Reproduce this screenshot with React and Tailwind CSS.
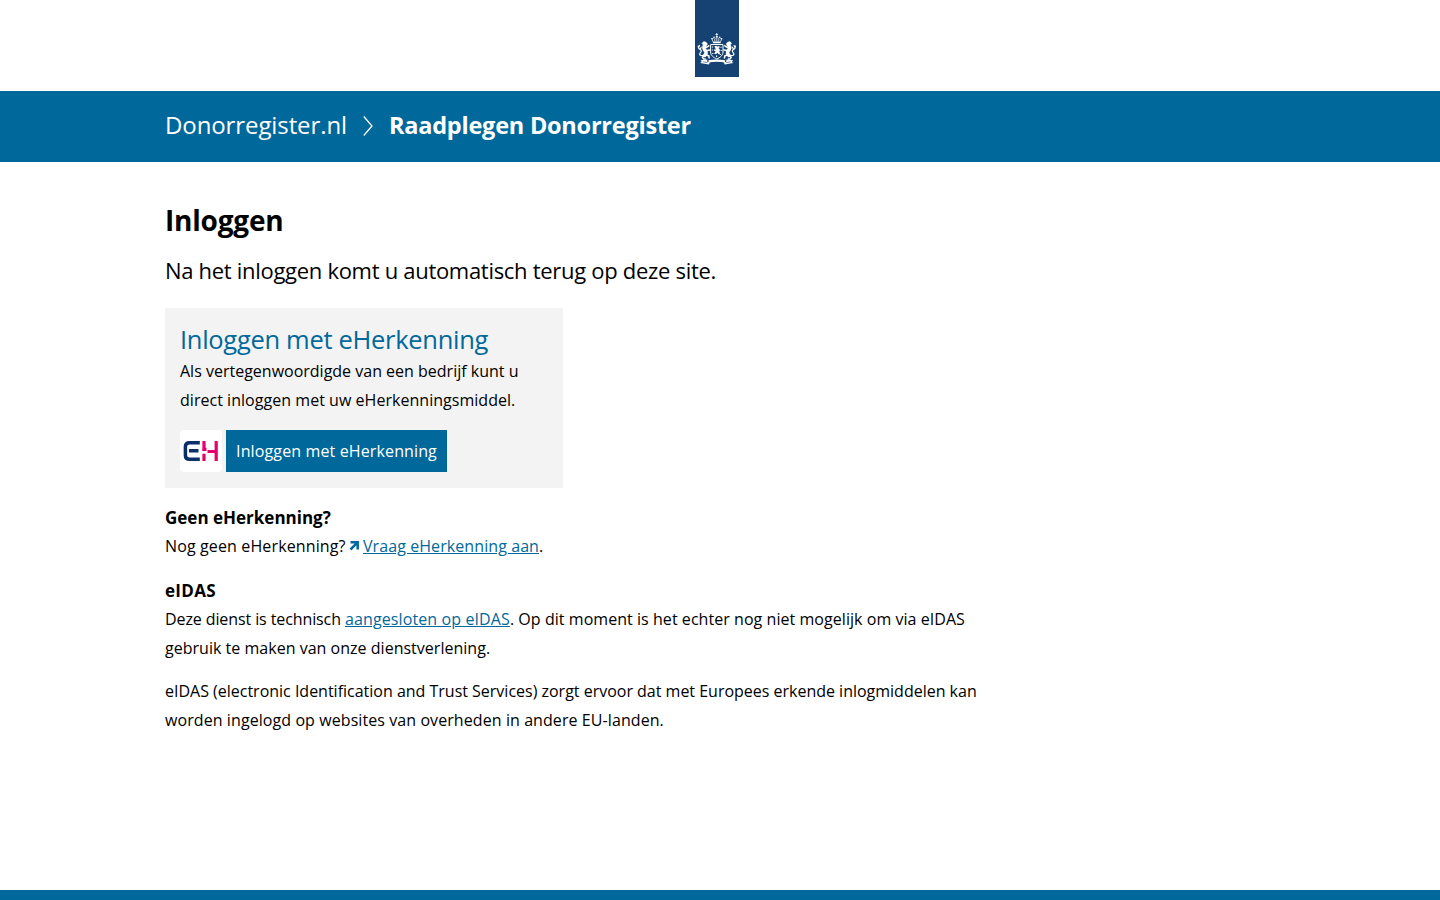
import React from 'react';

function Lion() {
  return (
    <>
      <path d="M7 43.300l1.700-1.700 2 .5 1.600 1.500-.4 1.600-1.900.7z" fill="#fff" strokeWidth=".5" />
      <path d="M9.600 45.500c-1.500 2.400-.6 3.900.7 5.300s1 3.200-.6 4.600" strokeWidth="3.500" />
      <path d="M11 47.500l2.800-1.700M11.500 50.400l3.300-.5M9.500 55l-2 2.300M10.500 54.500l3.400 1.500.2 2M7.500 57.500l1.200 1.600h1.500" strokeWidth="1.500" />
      <path d="M8.500 55.500c-2.800.6-4.400-.5-3.700-2s2-1.700 1.300-3.200-2.300-1-2.500-2.500M3.500 47.500l1-2M3.500 47.600l-.3-1.500M5.500 48.500l.7-1.300" strokeWidth="1.200" />
    </>
  );
}

function CoatOfArms() {
  return (
    <svg className="block h-[77px] w-[44px]" viewBox="0 0 44 77" role="img" aria-label="Rijksoverheid">
      <rect width="44" height="77" fill="#154273" />
      {/* crown */}
      <g fill="#fff">
        <path d="M21.400 33h.8v1.100h.9v.7h-.9v1h-.8v-1h-.9v-.7h.9z" />
        <circle cx="21.800" cy="36.800" r="1" />
        <circle cx="19" cy="37.300" r=".75" />
        <circle cx="24.600" cy="37.300" r=".75" />
        <circle cx="16.900" cy="38.700" r=".75" />
        <circle cx="26.700" cy="38.700" r=".75" />
        <path d="M17.600 41.600h8.400l-.5 1.700h-7.400z" />
      </g>
      <path d="M18 41.500c-1.600-2.400-.4-3.500.8-3.700M25.600 41.500c1.600-2.400.4-3.500-.8-3.700M20.100 41.300c-.8-1.800-.2-3 .5-3.500M23.500 41.300c.8-1.800.2-3-.5-3.500M21.800 37.500v4" fill="none" stroke="#fff" strokeWidth=".75" />
      {/* shield */}
      <path d="M15.600 44.500h12.400v7.500c0 3.500-3 5.500-6.200 7-3.200-1.500-6.200-3.500-6.200-7z" fill="#154273" stroke="#fff" strokeWidth="1" />
      <path d="M19.300 46.300l1.800-.6 1.500.9 1.800-.5.300 1.400-1.300.6 1.700 1.600-.8 1.900.9 2-1.600.7-1.100-1.600-1.600 1.500-1.700-.6 1.500-2.300-1.800-.7.200-1.200 1.700.1-.4-1.300z" fill="#fff" />
      <path d="M17.500 46.500v1M17.500 49.500v1M17.800 53v1M26 46.800v1M26.200 50v1M25.300 54v1M21.600 55.500v1.500" stroke="#fff" strokeWidth="1.200" />
      {/* supporting lions */}
      <g fill="none" stroke="#fff" strokeLinecap="round" strokeLinejoin="round">
        <Lion />
      </g>
      <g fill="none" stroke="#fff" strokeLinecap="round" strokeLinejoin="round" transform="matrix(-1 0 0 1 43.600 0)">
        <Lion />
      </g>
      {/* motto ribbon */}
      <path d="M13.500 60.200c5.200-1.100 11.400-1.100 16.600 0v2.400c-5.200-1.100-11.400-1.100-16.600 0zM5.500 60.300l6.800-.8v2.400l2.600.4-1 2.200-8.800-1.600 1.700-.9zM38.100 60.300l-6.800-.8v2.400l-2.600.4 1 2.200 8.800-1.600-1.700-.9z" fill="#fff" />
      <path d="M8 61.700l4.500 1M35.600 61.700l-4.500 1" stroke="#154273" strokeWidth=".6" />
    </svg>
  );
}

function EHerkenningLogo() {
  return (
    <svg className="block h-[42px] w-[42px]" viewBox="0 0 42 42" aria-hidden="true">
      <rect width="42" height="42" rx="4" fill="#fff" />
      <path d="M19.800 12.700H9.500Q5.400 12.700 5.400 16.800V25.200Q5.400 29.300 9.500 29.300H19.800M9 20.800H18.500" fill="none" stroke="#0b2f6b" strokeWidth="3.500" />
      <path d="M24 11V18.300M24 23.800V31M36.200 11V31M27.500 21.500H36M22.300 19.400H26.500" fill="none" stroke="#e5006d" strokeWidth="3.200" />
    </svg>
  );
}

export default function App() {
  return (
    <div className="flex h-[900px] flex-col bg-white font-['Open_Sans','Liberation_Sans',sans-serif] text-[16px] leading-[29px] whitespace-nowrap text-black">
      <header>
        <div className="flex h-[91px] justify-center pr-[6px]">
          <CoatOfArms />
        </div>
        <nav className="flex h-[71px] items-start bg-[#01689b] pt-[17px] pl-[165px] text-[24px] leading-[33px] text-white">
          <a className="w-[198px] tracking-[-0.097px]">Donorregister.nl</a>
          <svg className="mt-[7px] h-[22px] w-[10px]" viewBox="0 0 10 22" fill="none" stroke="#fff" strokeWidth="1.300">
            <path d="M.8 1.500L9 11L.8 20.500" />
          </svg>
          <span className="ml-4 text-[23.5px] leading-[35px] font-bold tracking-[-0.23px]">Raadplegen Donorregister</span>
        </nav>
      </header>

      <main className="grow pt-[38px] pl-[165px]">
        <h1 className="text-[28px] leading-[40px] font-bold tracking-[-0.2px]">Inloggen</h1>
        <p className="mt-[13px] text-[22px] leading-[34px] tracking-[-0.298px]">Na het inloggen komt u automatisch terug op deze site.</p>

        <section className="mt-[21px] h-[180px] w-[398px] bg-[#f3f3f3] px-[15px] pt-[14px]">
          <h2 className="text-[25.5px] leading-[35px] tracking-[-0.3px] text-[#01689b]">Inloggen met eHerkenning</h2>
          <p>
            Als vertegenwoordigde van een bedrijf kunt u
            <br />
            <span className="tracking-[0.035px]">direct inloggen met uw eHerkenningsmiddel.</span>
          </p>
          <div className="mt-[15px] flex gap-1">
            <EHerkenningLogo />
            <button className="h-[42px] w-[221px] bg-[#01689b] tracking-[0.13px] text-white">Inloggen met eHerkenning</button>
          </div>
        </section>

        <h3 className="mt-[15px] text-[17px] font-bold">Geen eHerkenning?</h3>
        <p className="flex">
          <span className="w-[184px] tracking-[0.13px]">Nog geen eHerkenning?</span>
          <svg className="mt-[8px] mr-[4px] h-[11px] w-[10px]" viewBox="0 0 10 11" fill="none" stroke="#01689b" strokeWidth="2.500">
            <path d="M1.500 2.300H8.700V9.500M8.300 2.700L1.500 9.500" />
          </svg>
          <a className="tracking-[0.08px] text-[#01689b] underline">Vraag eHerkenning aan</a>.
        </p>

        <h3 className="mt-[15px] text-[17px] font-bold tracking-[0.3px]">eIDAS</h3>
        <p>
          <span className="tracking-[-0.1px]">Deze dienst is technisch </span>
          <a className="tracking-[0.11px] text-[#01689b] underline">aangesloten op eIDAS</a>
          <span className="tracking-[0.05px]">. Op dit moment is het echter nog niet mogelijk om via eIDAS</span>
          <br />
          <span className="tracking-[0.02px]">gebruik te maken van onze dienstverlening.</span>
        </p>
        <p className="mt-[14px]">
          <span className="tracking-[-0.008px]">
            eIDAS (electronic Identification and Trust Services) zorgt ervoor dat met Europees erkende inlogmiddelen kan
          </span>
          <br />
          <span className="tracking-[0.08px]">worden ingelogd op websites van overheden in andere EU-landen.</span>
        </p>
      </main>

      <footer className="h-[10px] bg-[#01689b]" />
    </div>
  );
}
